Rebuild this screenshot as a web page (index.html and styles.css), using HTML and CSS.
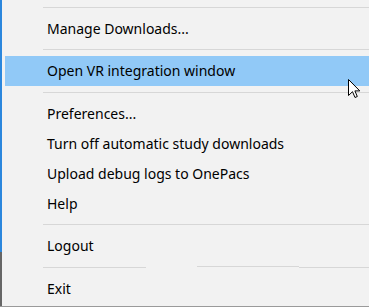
FILE: index.html
```html
<!DOCTYPE html>
<html>
<head>
<meta charset="utf-8">
<link rel="stylesheet" href="styles.css">
</head>
<body>
<div class="window">
  <div class="edge"></div>
  <div class="menu">
    <div class="sep sep-top"></div>
    <div class="item">Manage Downloads...</div>
    <div class="sep sep-tight"></div>
    <div class="item active">Open VR integration window</div>
    <div class="sep"></div>
    <div class="item">Preferences...</div>
    <div class="item">Turn off automatic study downloads</div>
    <div class="item">Upload debug logs to OnePacs</div>
    <div class="item">Help</div>
    <div class="sep sep-tight"></div>
    <div class="item">Logout</div>
    <div class="sep sep-broken">
      <span class="seg seg-a"></span>
      <span class="seg-gap"></span>
      <span class="seg seg-b"></span>
      <span class="seg seg-c"></span>
    </div>
    <div class="item">Exit</div>
  </div>
  <svg class="cursor" width="13" height="20" viewBox="0 0 13 20">
    <path d="M0.5 0.5 V16.5 L4.5 12.7 L7 18.5 L9.3 17.5 L6.9 11.9 H11.8 Z" fill="#fff" stroke="#000" stroke-width="1" stroke-linejoin="miter"/>
  </svg>
</div>
</body>
</html>
```

FILE: styles.css
```css
html, body {
  margin: 0;
  padding: 0;
  background: #f2f2f2;
}

.window {
  position: relative;
  width: 369px;
  height: 307px;
  box-sizing: border-box;
  display: flex;
  background: #f2f2f2;
  border-bottom: 1px solid #9a9a9a;
  overflow: hidden;
  font-family: "Noto Sans", "Open Sans", sans-serif;
  font-size: 14px;
  color: #000;
}

.edge {
  width: 2px;
  flex: none;
  background: linear-gradient(to bottom, #2b87dd 0, #2b87dd 252px, #666 252px, #666 100%);
}

.menu {
  flex: 1;
  display: flex;
  flex-direction: column;
}

.item {
  height: 30px;
  line-height: 30px;
  margin-left: 3px;
  padding-left: 42px;
  white-space: nowrap;
}

.item.active {
  background: #91c9f7;
}

.sep {
  height: 1px;
  margin: 6px 0 6px 41px;
  background: #d7d7d7;
}

.sep-top {
  margin-top: 7px;
  margin-bottom: 6px;
}

.sep-tight {
  margin-top: 5px;
}

.sep-broken {
  display: flex;
  align-items: flex-start;
  background: none;
  height: 2px;
  margin-top: 5px;
  margin-bottom: 6px;
}

.seg {
  display: block;
  height: 1px;
  background: #d7d7d7;
}

.seg-a {
  width: 103px;
  margin-top: 1px;
}

.seg-gap {
  width: 51px;
}

.seg-b {
  width: 102px;
}

.seg-c {
  flex: 1;
  margin-top: 1px;
}

.cursor {
  position: absolute;
  left: 348px;
  top: 79px;
}
```
